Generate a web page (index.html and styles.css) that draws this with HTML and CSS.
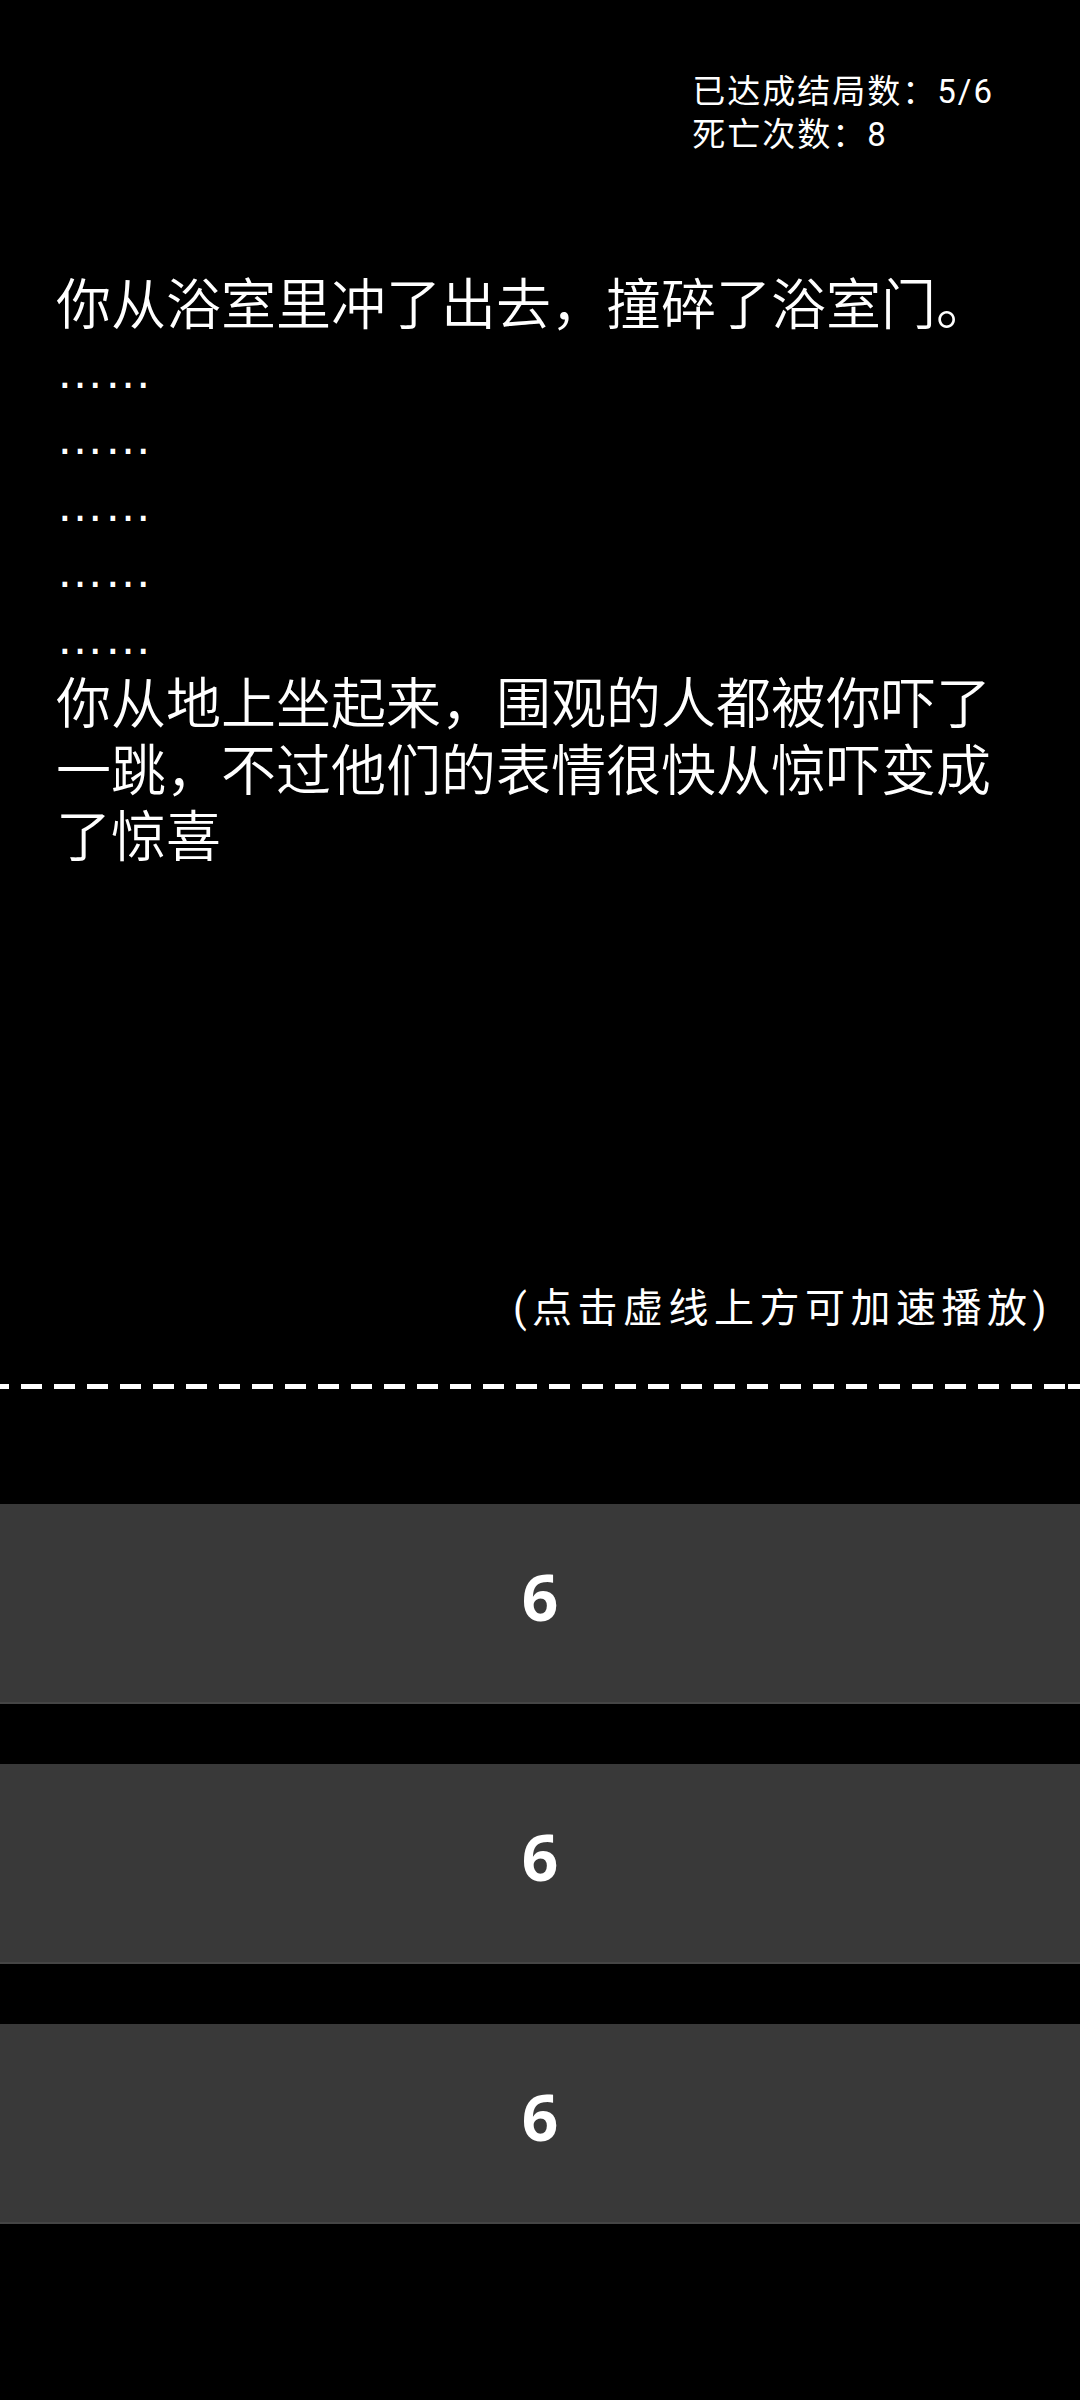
FILE: index.html
```html
<!DOCTYPE html>
<html lang="zh-CN">
<head>
    <meta charset="UTF-8">
    <meta name="viewport" content="width=device-width, initial-scale=1.0">
    <title>结局</title>
    <link rel="stylesheet" href="styles.css">
</head>
<body>
    <div class="screen">
        <div class="stats">
            <div class="stats-box">
                <div>已达成结局数：5/6</div>
                <div>死亡次数：8</div>
            </div>
        </div>

        <div class="story">
            <p>你从浴室里冲了出去，撞碎了浴室门。</p>
            <p class="dots">……</p>
            <p class="dots">……</p>
            <p class="dots">……</p>
            <p class="dots">……</p>
            <p class="dots">……</p>
            <p>你从地上坐起来，围观的人都被你吓了一跳，不过他们的表情很快从惊吓变成了惊喜</p>
        </div>

        <div class="hint">(点击虚线上方可加速播放)</div>
        <div class="dash-line"></div>

        <div class="choices">
            <button class="choice">6</button>
            <button class="choice">6</button>
            <button class="choice">6</button>
        </div>
    </div>
</body>
</html>
```

FILE: styles.css
```css
body {
    margin: 0;
    background-color: #000;
    color: #fff;
    font-family: Roboto, "Noto Sans CJK SC", sans-serif;
}

.screen {
    width: 1080px;
    height: 2400px;
    display: flex;
    flex-direction: column;
}

.stats {
    display: flex;
    justify-content: flex-end;
    padding: 70px 86px 0 0;
}

.stats-box {
    font-size: 33px;
    line-height: 43px;
    letter-spacing: 2px;
}

.story {
    margin-top: 116px;
    padding: 0 56px;
    font-size: 55px;
    font-weight: 350;
    line-height: 66.5px;
}

.story p {
    margin: 0;
}

.story .dots {
    font-family: "Liberation Sans", sans-serif;
    font-size: 48px;
}

.hint {
    margin-top: 414px;
    padding-right: 28px;
    text-align: right;
    font-size: 40px;
    line-height: 48px;
    letter-spacing: 5.5px;
}

.dash-line {
    margin-top: 51px;
    height: 5px;
    background-image: repeating-linear-gradient(to right, #fff 0, #fff 21px, transparent 21px, transparent 33px);
    background-position: -12px 0;
}

.choices {
    margin-top: 115px;
    display: flex;
    flex-direction: column;
    gap: 60px;
}

.choice {
    height: 200px;
    border: none;
    border-bottom: 2px solid #454545;
    background-color: #393939;
    color: #fff;
    font-family: "Noto Sans", sans-serif;
    font-size: 64px;
    font-weight: 700;
    padding: 0 0 12px;
}
```
